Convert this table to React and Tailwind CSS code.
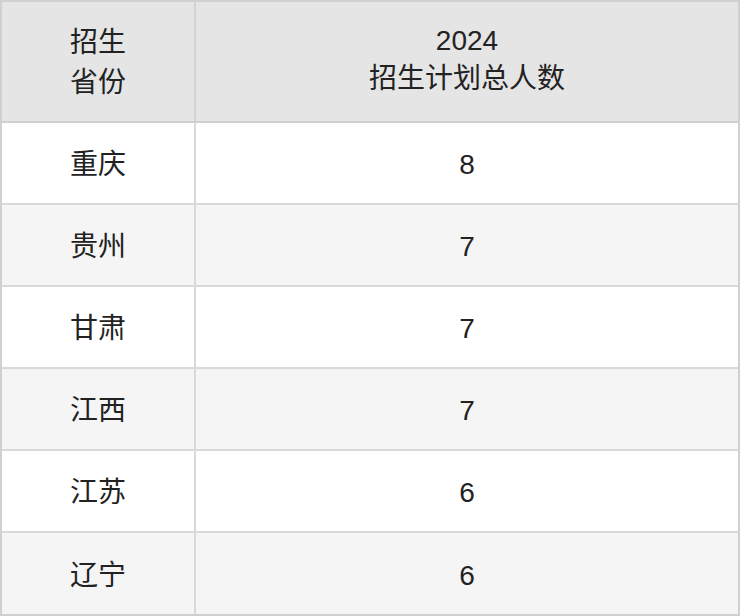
const rows = [
  { province: '重庆', count: 8 },
  { province: '贵州', count: 7 },
  { province: '甘肃', count: 7 },
  { province: '江西', count: 7 },
  { province: '江苏', count: 6 },
  { province: '辽宁', count: 6 },
];

const font = { fontFamily: '"Liberation Sans", "Noto Sans CJK SC", sans-serif' };

export default function App() {
  return (
    <div className="w-[740px] h-[616px] bg-white" style={font}>
      <div className="border-2 border-[#d0d0d0] text-[28px] leading-[40px] text-[#222]">
        {/* Header */}
        <div className="flex h-[121px] bg-[#e5e5e5] border-b-2 border-[#d0d0d0]">
          <div className="w-[194px] border-r-2 border-[#d4d4d4] flex items-center justify-center text-center pt-[2px]">
            招生<br />省份
          </div>
          <div className="flex-1 flex items-center justify-center text-center leading-[38px] -mt-[3px]">
            2024<br />招生计划总人数
          </div>
        </div>

        {/* Rows */}
        {rows.map((row, i) => (
          <div
            key={row.province}
            className={`flex pt-[4px] ${i === rows.length - 1 ? 'h-[81px]' : 'h-[82px] border-b-2 border-[#d9d9d9]'} ${
              i % 2 === 1 ? 'bg-[#f5f5f5]' : 'bg-white'
            }`}
          >
            <div className="w-[194px] border-r-2 border-[#d9d9d9] -mt-[4px] pt-[4px] flex items-center justify-center">
              {row.province}
            </div>
            <div className="flex-1 flex items-center justify-center">{row.count}</div>
          </div>
        ))}
      </div>
    </div>
  );
}
